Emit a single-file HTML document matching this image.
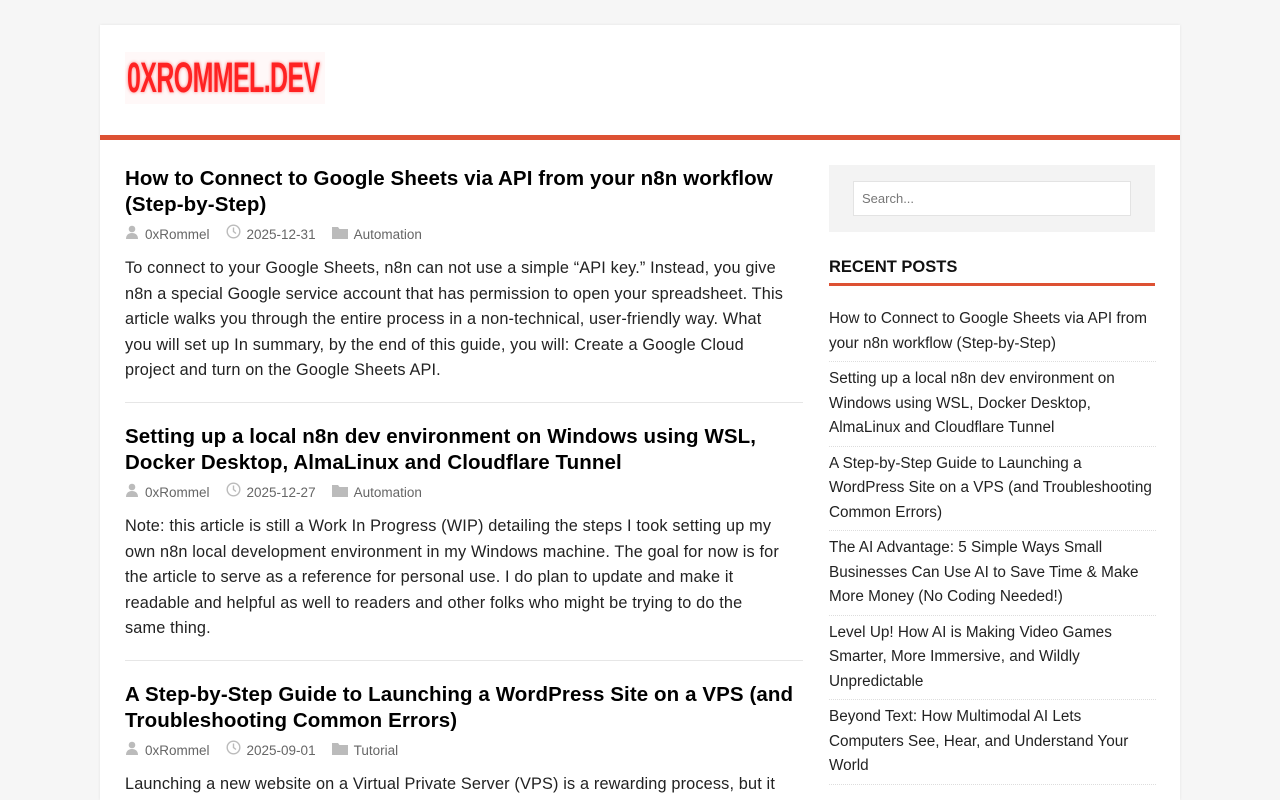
<!DOCTYPE html>
<html><head><meta charset="utf-8"><style>
*{margin:0;padding:0;box-sizing:border-box}
html,body{overflow:hidden}
body{background:#f6f6f6;font-family:"Liberation Sans",sans-serif;color:#222;width:1280px;height:800px}
#wrap{position:absolute;left:100px;top:25px;width:1080px;height:775px;background:#fff;box-shadow:0 0 3px rgba(0,0,0,.08);overflow:hidden}
#logo{position:absolute;left:25px;top:27px;width:200px;height:52px;background:#fff8f8}
#logo span{position:absolute;left:2px;top:4px;font-family:"Liberation Sans Narrow","Liberation Sans",sans-serif;font-weight:bold;font-size:43px;line-height:44px;color:#ff2222;text-shadow:0 0 4px rgba(255,40,40,.6);transform-origin:0 0;transform:scaleX(.58);white-space:nowrap;letter-spacing:-1px}
#bar{position:absolute;left:0;top:110px;width:1080px;height:5px;background:#dd5133}
.post{position:absolute;left:25px;width:678px}
.post h2{font-size:20.5px;line-height:26px;font-weight:bold;color:#000;white-space:nowrap;letter-spacing:0.1px;margin-top:2px}
.meta{font-size:13.5px;color:#666;height:30px;line-height:30px;margin-top:2px;white-space:nowrap}
.meta i{display:inline-block;vertical-align:middle;margin-right:6px}
.meta b{font-weight:normal;margin-right:16px}
.ex{font-size:16.3px;line-height:25.5px;margin-top:6px;white-space:nowrap;color:#222;letter-spacing:0.15px}
.sep{position:absolute;left:25px;width:678px;border-top:1px solid #e6e6e6}
#search{position:absolute;left:729px;top:140px;width:326px;height:67px;background:#f3f3f3}
#search div{position:absolute;left:24px;top:16px;width:278px;height:35px;background:#fff;border:1px solid #e3e3e3;font-size:13px;color:#777;padding:9px 8px}
#rp{position:absolute;left:729px;top:233px;font-size:16.5px;font-weight:bold;color:#111}
#rpl{position:absolute;left:729px;top:258px;width:326px;height:3px;background:#dd5133}
#list{position:absolute;left:729px;top:282px;width:327px}
#list div{font-size:15.3px;line-height:24.5px;padding:0 0 5px;margin-bottom:5px;border-bottom:1px dotted #ddd;white-space:nowrap;color:#222}
</style></head><body>
<div id="wrap">
<div id="logo"><span>0XROMMEL.DEV</span></div>
<div id="bar"></div>

<div class="post" style="top:139px">
<h2>How to Connect to Google Sheets via API from your n8n workflow<br>(Step-by-Step)</h2>
<div class="meta"><i><svg width="14" height="14" viewBox="0 0 14 14"><circle cx="7" cy="4" r="3.3" fill="#bbb"/><path d="M1 14c0-4 2.5-6 6-6s6 2 6 6z" fill="#bbb"/></svg></i><b>0xRommel</b><i><svg width="15" height="15" viewBox="0 0 15 15"><circle cx="7.5" cy="7.5" r="6.3" fill="none" stroke="#bbb" stroke-width="1.4"/><path d="M7.5 3.5v4l2.5 2" fill="none" stroke="#bbb" stroke-width="1.4"/></svg></i><b>2025-12-31</b><i><svg width="16" height="13" viewBox="0 0 16 13"><path d="M0 1h6l1.5 2H16v10H0z" fill="#bbb"/></svg></i>Automation</div>
<div class="ex">To connect to your Google Sheets, n8n can not use a simple “API key.” Instead, you give<br>n8n a special Google service account that has permission to open your spreadsheet. This<br>article walks you through the entire process in a non-technical, user-friendly way. What<br>you will set up In summary, by the end of this guide, you will: Create a Google Cloud<br>project and turn on the Google Sheets API.</div>
</div>
<div class="sep" style="top:377px"></div>

<div class="post" style="top:397px">
<h2>Setting up a local n8n dev environment on Windows using WSL,<br>Docker Desktop, AlmaLinux and Cloudflare Tunnel</h2>
<div class="meta"><i><svg width="14" height="14" viewBox="0 0 14 14"><circle cx="7" cy="4" r="3.3" fill="#bbb"/><path d="M1 14c0-4 2.5-6 6-6s6 2 6 6z" fill="#bbb"/></svg></i><b>0xRommel</b><i><svg width="15" height="15" viewBox="0 0 15 15"><circle cx="7.5" cy="7.5" r="6.3" fill="none" stroke="#bbb" stroke-width="1.4"/><path d="M7.5 3.5v4l2.5 2" fill="none" stroke="#bbb" stroke-width="1.4"/></svg></i><b>2025-12-27</b><i><svg width="16" height="13" viewBox="0 0 16 13"><path d="M0 1h6l1.5 2H16v10H0z" fill="#bbb"/></svg></i>Automation</div>
<div class="ex">Note: this article is still a Work In Progress (WIP) detailing the steps I took setting up my<br>own n8n local development environment in my Windows machine. The goal for now is for<br>the article to serve as a reference for personal use. I do plan to update and make it<br>readable and helpful as well to readers and other folks who might be trying to do the<br>same thing.</div>
</div>
<div class="sep" style="top:635px"></div>

<div class="post" style="top:655px">
<h2>A Step-by-Step Guide to Launching a WordPress Site on a VPS (and<br>Troubleshooting Common Errors)</h2>
<div class="meta"><i><svg width="14" height="14" viewBox="0 0 14 14"><circle cx="7" cy="4" r="3.3" fill="#bbb"/><path d="M1 14c0-4 2.5-6 6-6s6 2 6 6z" fill="#bbb"/></svg></i><b>0xRommel</b><i><svg width="15" height="15" viewBox="0 0 15 15"><circle cx="7.5" cy="7.5" r="6.3" fill="none" stroke="#bbb" stroke-width="1.4"/><path d="M7.5 3.5v4l2.5 2" fill="none" stroke="#bbb" stroke-width="1.4"/></svg></i><b>2025-09-01</b><i><svg width="16" height="13" viewBox="0 0 16 13"><path d="M0 1h6l1.5 2H16v10H0z" fill="#bbb"/></svg></i>Tutorial</div>
<div class="ex">Launching a new website on a Virtual Private Server (VPS) is a rewarding process, but it</div>
</div>

<div id="search"><div>Search...</div></div>
<div id="rp">RECENT POSTS</div>
<div id="rpl"></div>
<div id="list">
<div>How to Connect to Google Sheets via API from<br>your n8n workflow (Step-by-Step)</div>
<div>Setting up a local n8n dev environment on<br>Windows using WSL, Docker Desktop,<br>AlmaLinux and Cloudflare Tunnel</div>
<div>A Step-by-Step Guide to Launching a<br>WordPress Site on a VPS (and Troubleshooting<br>Common Errors)</div>
<div>The AI Advantage: 5 Simple Ways Small<br>Businesses Can Use AI to Save Time &amp; Make<br>More Money (No Coding Needed!)</div>
<div>Level Up! How AI is Making Video Games<br>Smarter, More Immersive, and Wildly<br>Unpredictable</div>
<div>Beyond Text: How Multimodal AI Lets<br>Computers See, Hear, and Understand Your<br>World</div>
</div>
</div>
</body></html>
